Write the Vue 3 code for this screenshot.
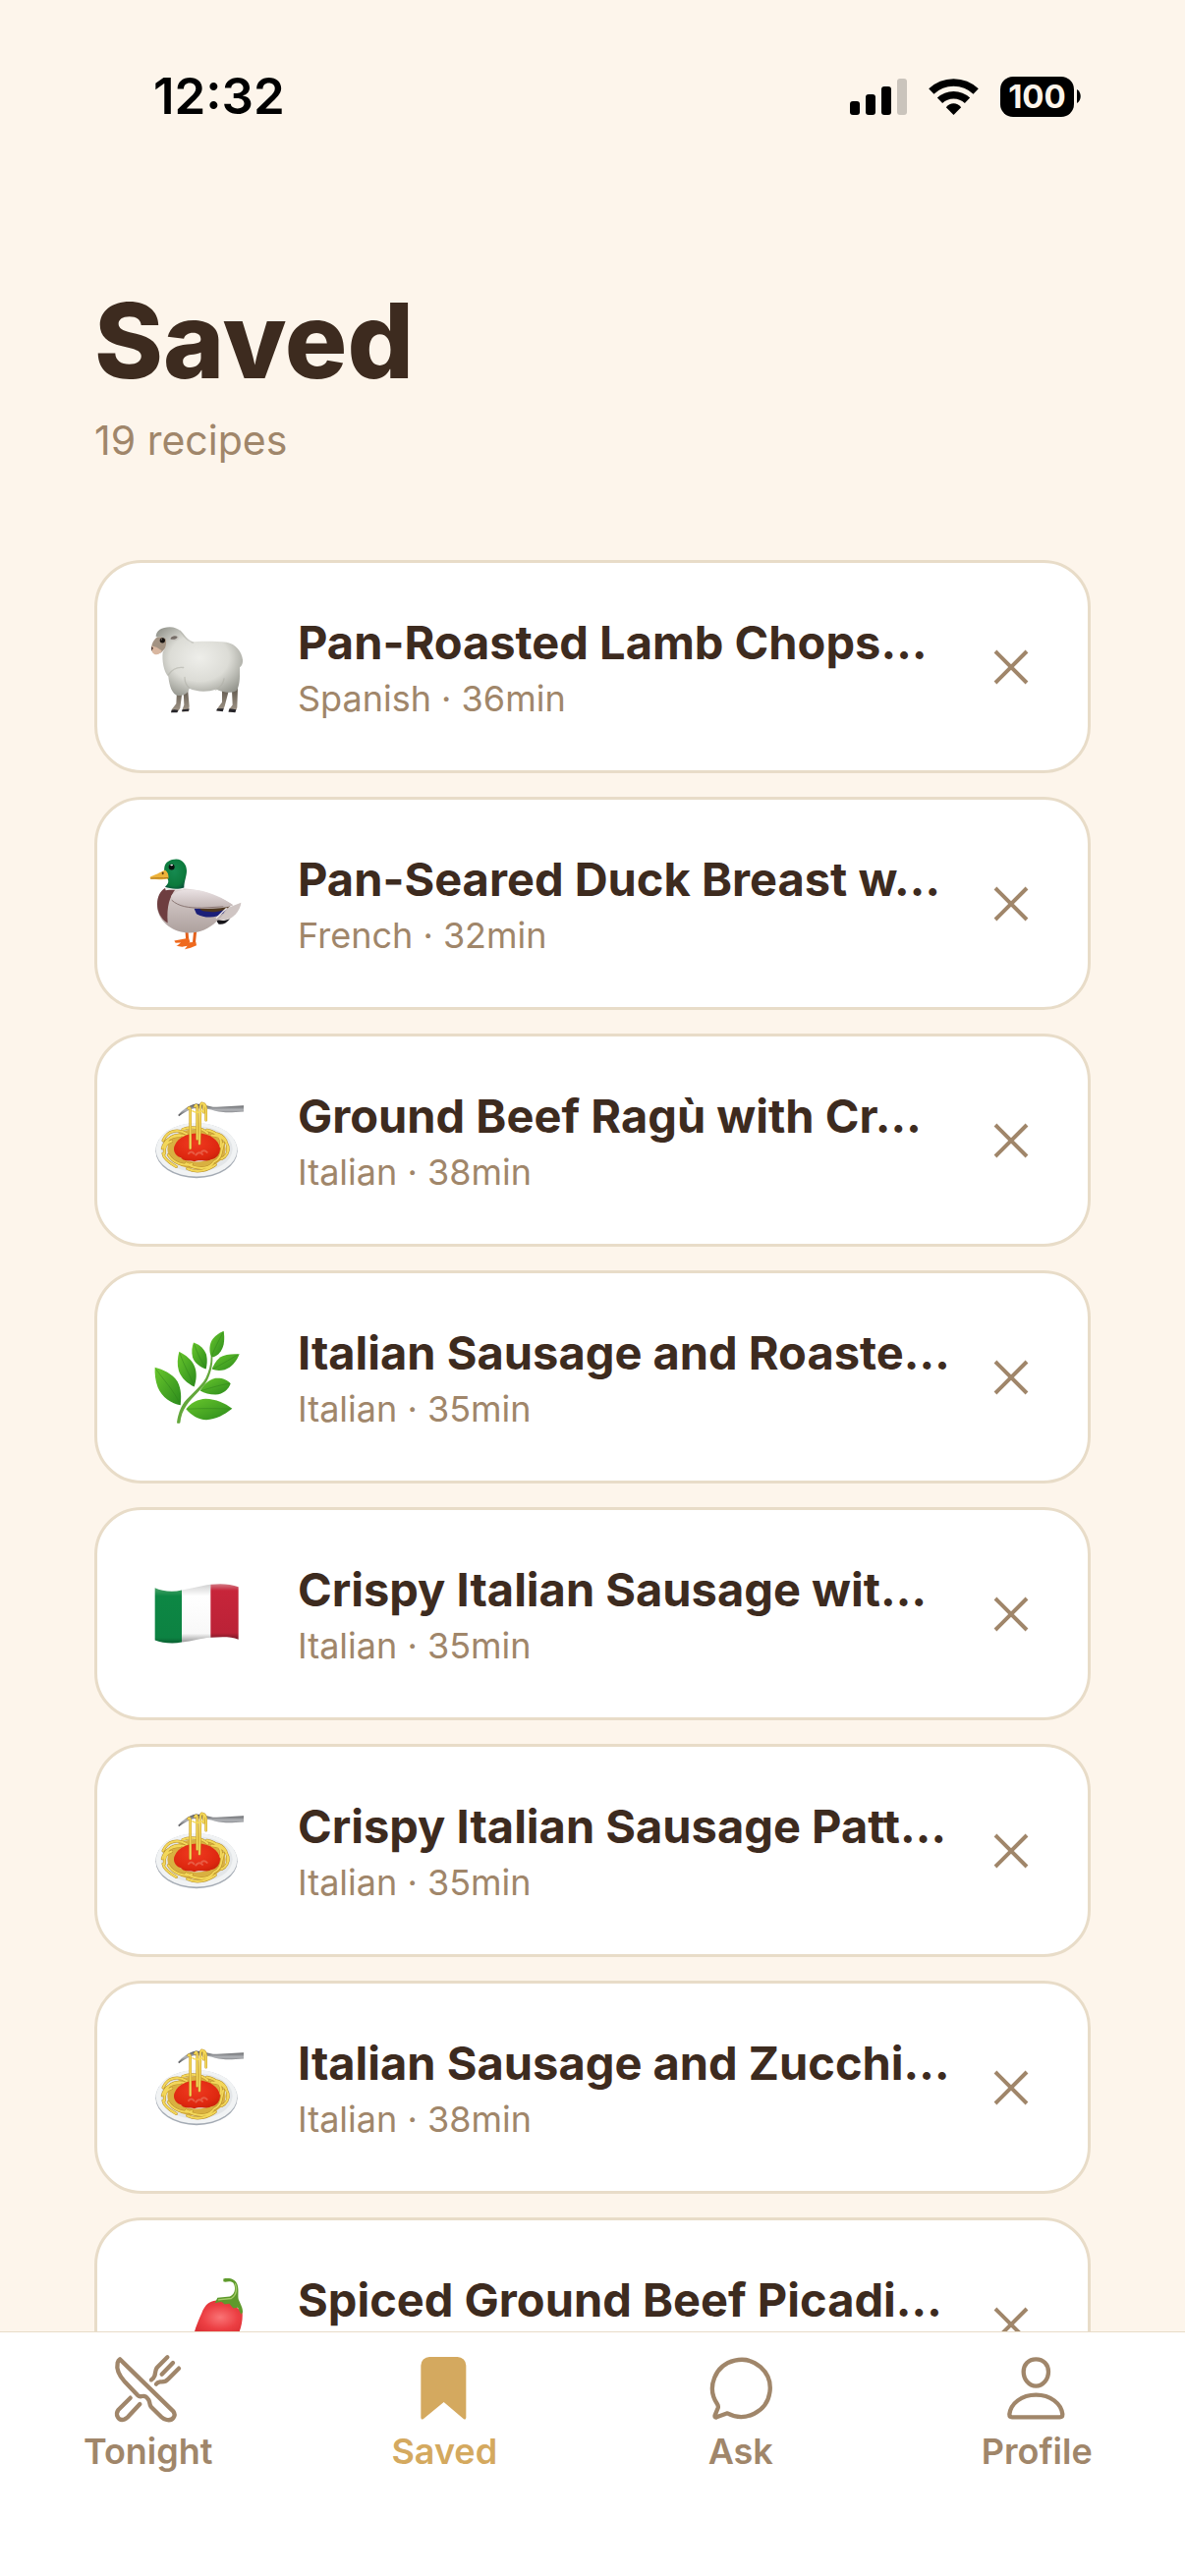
<template>
  <div class="saved-page">
    <!-- Emoji sprite -->
    <svg width="0" height="0" aria-hidden="true">
      <defs>
        <radialGradient id="wool" cx="0.5" cy="0.45" r="0.62">
          <stop offset="0" stop-color="#EEEEEA" />
          <stop offset="0.55" stop-color="#DCDCD6" />
          <stop offset="1" stop-color="#94958D" />
        </radialGradient>
        <linearGradient id="sheep-leg" x1="0" y1="0" x2="0" y2="1">
          <stop offset="0" stop-color="#5F574C" />
          <stop offset="1" stop-color="#A3988A" />
        </linearGradient>
        <radialGradient id="duck-head" cx="0.45" cy="0.4" r="0.7">
          <stop offset="0" stop-color="#168A50" />
          <stop offset="0.7" stop-color="#0C7A3C" />
          <stop offset="1" stop-color="#0A4A3A" />
        </radialGradient>
        <linearGradient id="duck-body" x1="0" y1="0" x2="0" y2="1">
          <stop offset="0" stop-color="#DDD3D2" />
          <stop offset="1" stop-color="#ADA09D" />
        </linearGradient>
        <linearGradient id="duck-wing" x1="0" y1="0" x2="0" y2="1">
          <stop offset="0" stop-color="#EAE2E3" />
          <stop offset="1" stop-color="#BFB2B1" />
        </linearGradient>
        <linearGradient id="fork" x1="0" y1="0" x2="0" y2="1">
          <stop offset="0" stop-color="#4E4F52" />
          <stop offset="0.5" stop-color="#B3B5B9" />
          <stop offset="1" stop-color="#4C4D50" />
        </linearGradient>
        <radialGradient id="sauce" cx="0.45" cy="0.35" r="0.75">
          <stop offset="0" stop-color="#F03A20" />
          <stop offset="0.7" stop-color="#DE2810" />
          <stop offset="1" stop-color="#C42008" />
        </radialGradient>
        <linearGradient id="leaf" x1="0" y1="0" x2="1" y2="1">
          <stop offset="0" stop-color="#69C72C" />
          <stop offset="1" stop-color="#2B8A1C" />
        </linearGradient>
        <linearGradient id="flag-green" x1="0" y1="0" x2="0" y2="1">
          <stop offset="0" stop-color="#4AA268" />
          <stop offset="0.15" stop-color="#0D8744" />
          <stop offset="0.9" stop-color="#0C8242" />
          <stop offset="1" stop-color="#0A5F31" />
        </linearGradient>
        <linearGradient id="flag-white" x1="0" y1="0" x2="0" y2="1">
          <stop offset="0" stop-color="#D2D2D2" />
          <stop offset="0.2" stop-color="#FFFFFF" />
          <stop offset="0.85" stop-color="#F8F8F8" />
          <stop offset="1" stop-color="#9A9A9A" />
        </linearGradient>
        <linearGradient id="flag-red" x1="0" y1="0" x2="0" y2="1">
          <stop offset="0" stop-color="#D27C86" />
          <stop offset="0.12" stop-color="#C7253A" />
          <stop offset="0.88" stop-color="#BB2237" />
          <stop offset="1" stop-color="#741826" />
        </linearGradient>
        <radialGradient id="chili" cx="0.74" cy="0.3" r="0.6">
          <stop offset="0" stop-color="#FA7476" />
          <stop offset="0.35" stop-color="#EC3F43" />
          <stop offset="1" stop-color="#C0141A" />
        </radialGradient>
      </defs>

      <symbol id="emoji-sheep" viewBox="21 13 324 324">
        <path d="M120 250L118 288 104 306 104 314 122 314 130 302 137 246zM140 246L142 292 136 308 137 313 156 312 158 296 153 240zM258 246L258 284 243 304 242 311 260 311 266 296 278 250zM288 248L290 292 279 306 279 314 298 314 304 300 306 240z" fill="url(#sheep-leg)" />
        <path d="M104 308L102 315 121 315 124 308 112 306zM137 306L135 312 156 311 158 304zM244 303L240 309 260 312 263 303zM281 303L277 313 298 315 301 306z" fill="#26252A" />
        <path d="M62 84C49 92 42 106 42 122 44 136 56 140 72 132L92 112 90 84z" fill="#A39383" />
        <path d="M44 112C42 124 44 136 54 138 66 138 72 132 74 126L58 116z" fill="#D9B7A0" />
        <path d="M42 114L48 118 43 127z" fill="#4A3730" />
        <path d="M56 84C56 64 74 54 98 54 128 54 140 74 160 101 184 97 238 97 272 101 300 106 318 130 321 154 322 164 318 174 312 177 312 200 314 224 304 246 288 260 254 252 240 244 214 254 178 252 158 242 154 258 138 268 118 262 100 252 96 222 94 206 80 190 74 158 77 130 84 122 90 104 86 90 76 82 64 86 56 84z" fill="url(#wool)" />
        <path d="M238 246C252 240 262 226 264 212M158 240C148 232 144 220 144 208M94 200C108 180 126 176 140 178M130 66C140 80 150 96 170 102" fill="none" stroke="#B0B0A8" stroke-width="4" stroke-linecap="round" opacity="0.6" />
        <path d="M97 88C102 78 116 76 125 83 128 90 120 97 110 96 102 96 98 92 97 88z" fill="#C8C6C0" />
        <path d="M100 90C104 82 114 79 122 84 118 92 108 94 100 90z" fill="#756C66" />
        <circle cx="76" cy="95" r="8" fill="#15120F" />
        <circle cx="73" cy="92" r="2" fill="#9A8F84" />
      </symbol>

      <symbol id="emoji-duck" viewBox="21 46 324 324">
        <path d="M150 292L152 320M176 292L172 332" fill="none" stroke="#E4601B" stroke-width="9" />
        <path d="M156 314L132 318 112 322 116 329 132 328 122 336 138 336 160 326zM178 326L150 328 118 338 136 341 152 338 144 348 162 344 180 336z" fill="#EF6A1E" />
        <path d="M264 226L316 206C314 226 300 246 280 256L246 262z" fill="#CFC5C3" />
        <path d="M238 256C252 262 266 262 282 255 272 268 258 275 247 271z" fill="#17151A" />
        <path d="M92 160C126 160 168 164 200 172 240 184 280 204 290 212 276 220 260 250 240 264 220 284 190 298 160 298 110 298 66 266 60 222 58 190 70 168 92 160z" fill="url(#duck-body)" />
        <path d="M86 160L118 162C98 186 88 216 92 268 70 254 60 232 60 210 60 188 70 168 86 160z" fill="#6E3E40" />
        <path d="M172 222L272 222 262 238C240 254 204 254 180 240z" fill="#1B1F78" />
        <path d="M182 218L284 214C270 232 230 240 196 230z" fill="#4E3720" />
        <path d="M102 186C116 166 156 162 196 170 240 180 280 204 292 214 262 224 224 226 186 224 148 224 112 212 102 186z" fill="url(#duck-wing)" />
        <path d="M104 198C126 218 156 222 196 222L262 218" fill="none" stroke="#8B7774" stroke-width="3" />
        <path d="M240 254L272 222" stroke="#EEE8E6" stroke-width="4" />
        <path d="M82 154L142 158 140 166C118 168 98 166 86 168z" fill="#F0F0EE" />
        <path d="M82 98C84 82 100 73 118 73 138 74 150 90 150 108 150 126 142 140 142 160 124 166 98 164 84 158 94 148 96 142 92 134 82 124 80 112 82 98z" fill="url(#duck-head)" />
        <path d="M84 106C72 112 62 118 40 126 36 130 38 134 44 134 62 136 80 136 94 132 96 122 92 112 84 106z" fill="#EDB23A" />
        <path d="M40 132C58 130 74 132 94 130" fill="none" stroke="#A9731D" stroke-width="3" />
        <ellipse cx="77" cy="116" rx="3" ry="4" fill="#5B3B12" />
        <ellipse cx="104" cy="97" rx="9" ry="9" fill="#08120E" />
        <ellipse cx="104" cy="91" rx="4" ry="2" fill="#FFFFFF" />
      </symbol>

      <symbol id="emoji-spaghetti" viewBox="21 19 324 324">
        <ellipse cx="180" cy="213" rx="125" ry="84" fill="#A4ABB4" />
        <ellipse cx="180" cy="210" rx="124" ry="82" fill="#F1F3F4" />
        <ellipse cx="180" cy="208" rx="110" ry="70" fill="#E3E6E8" />
        <g fill="none" stroke-linecap="round">
          <ellipse cx="180" cy="208" rx="78" ry="50" stroke="#D9B040" stroke-width="22" />
          <path d="M78 182C92 150 124 146 150 162M84 196C96 166 126 158 152 172M138 148C160 138 196 142 214 160M212 150C244 156 262 178 252 202M226 166C262 168 280 188 274 214M262 190C254 214 258 238 232 248M94 226C108 250 140 262 166 254M148 252C180 272 216 270 230 252M76 206C84 178 106 168 130 168M82 222C80 200 88 188 104 184M118 262C96 250 80 238 78 222M152 268C180 282 214 274 238 256M256 238C270 232 280 216 276 200M236 160C252 162 264 172 270 184" stroke="#B98F28" stroke-width="9" />
          <path d="M78 182C92 150 124 146 150 162M84 196C96 166 126 158 152 172M138 148C160 138 196 142 214 160M212 150C244 156 262 178 252 202M226 166C262 168 280 188 274 214M262 190C254 214 258 238 232 248M94 226C108 250 140 262 166 254M148 252C180 272 216 270 230 252M76 206C84 178 106 168 130 168M82 222C80 200 88 188 104 184M118 262C96 250 80 238 78 222M152 268C180 282 214 274 238 256M256 238C270 232 280 216 276 200M236 160C252 162 264 172 270 184" stroke="#F3D75A" stroke-width="6" />
        </g>
        <path d="M114 196C124 172 154 160 184 160 220 160 248 180 252 206 252 224 242 238 224 240 210 248 188 240 174 246 158 242 140 246 132 234 114 230 106 210 114 196z" fill="url(#sauce)" />
        <path d="M156 222q8 -10 16 0M178 226q10 -12 20 -2M196 216q8 -6 16 2" fill="none" stroke="#E85C44" stroke-width="6" stroke-linecap="round" />
        <path d="M124 104C138 88 154 76 178 70L200 72C214 76 226 80 242 80L324 75V94C296 96 268 98 248 94 232 92 222 86 206 86L172 84C156 88 140 98 126 108z" fill="url(#fork)" />
        <g fill="none" stroke-linecap="round">
          <path d="M161 206V92Q161 78 155 84M182 178V84Q182 68 175 78M189 192L192 78Q194 62 202 72V96M209 120V84Q206 66 196 70" stroke="#C49A2A" stroke-width="8" />
          <path d="M161 206V92Q161 78 155 84M182 178V84Q182 68 175 78M189 192L192 78Q194 62 202 72V96M209 120V84Q206 66 196 70M168 92Q180 100 200 92" stroke="#F4D95A" stroke-width="5" />
        </g>
      </symbol>

      <symbol id="emoji-herb" viewBox="21 22 324 324">
        <path d="M120 324C124 298 130 280 142 262 164 236 192 216 208 188 218 168 224 146 224 122L229 124C230 150 222 176 212 196 196 224 168 244 150 270 138 286 132 304 130 324Q125 328 120 324z" fill="#63A73B" />
        <g fill="url(#leaf)">
          <path d="M53 155C78 162 106 174 122 198 134 222 134 246 131 270 104 266 74 246 62 216 54 196 52 174 53 155z" />
          <path d="M127 107C148 118 166 132 174 152 182 172 180 194 173 214 152 204 134 188 126 166 120 146 122 126 127 107z" />
          <path d="M171 79C190 86 204 98 210 116 214 132 212 148 209 160 192 154 174 142 168 124 164 108 166 92 171 79z" />
          <path d="M263 44C266 66 266 88 254 106 246 118 234 124 225 124 218 106 218 84 230 68 240 56 250 50 263 44z" />
          <path d="M311 114C302 136 288 154 266 162 250 166 236 164 227 160 234 144 242 128 260 120 276 114 292 114 311 114z" />
          <path d="M191 226C202 208 218 192 238 188 256 186 274 192 284 204 278 222 262 236 238 238 220 238 204 234 191 226z" />
          <path d="M148 282C162 264 184 252 208 251 240 252 266 264 289 281 264 300 240 314 210 315 184 314 164 300 148 282z" />
        </g>
        <path d="M56 160C80 194 110 224 130 268M129 112C140 146 160 178 172 210M173 84C182 112 196 138 208 158M261 48C248 74 234 98 226 122M306 116C280 132 252 148 230 160M282 204C252 208 222 218 194 226M284 282C240 280 196 280 152 282" fill="none" stroke="#2D7F1B" stroke-width="2" opacity="0.7" />
      </symbol>

      <symbol id="emoji-flag" viewBox="21 25 324 324">
        <path d="M53 108C74 118 106 122 135 115V274C106 280 74 276 53 268z" fill="url(#flag-green)" />
        <path d="M135 115C168 110 192 102 223 98V260C192 262 168 272 135 274z" fill="url(#flag-white)" />
        <path d="M223 98C254 94 284 96 308 105V266C284 256 254 258 223 260z" fill="url(#flag-red)" />
      </symbol>

      <symbol id="emoji-chili" viewBox="261 214 324 324">
        <path d="M480 304C458 306 446 318 436 342 426 364 418 384 412 406 392 436 360 452 300 462 296 468 300 474 310 474 400 484 500 460 540 420 554 400 562 370 560 340L524 310z" fill="url(#chili)" />
        <path d="M476 312L484 296 522 292C540 284 540 262 532 250 524 244 514 246 508 248L502 246 502 238C520 234 538 238 544 254 550 270 546 286 548 300 554 314 562 328 561 340L556 347 546 326 532 328 520 314 506 316 496 308z" fill="#5E9A2C" />
        <path d="M486 302L526 298C544 286 544 266 538 252" fill="none" stroke="#A3CB68" stroke-width="4" />
      </symbol>
    </svg>

    <!-- Status Bar -->
    <div class="status-bar">
      <span class="status-time">12:32</span>
      <div class="status-icons">
        <svg class="signal-icon" viewBox="0 0 174 111" aria-hidden="true">
          <rect x="0" y="69" width="30" height="42" rx="9" />
          <rect x="48" y="48" width="30" height="63" rx="9" />
          <rect x="96" y="24" width="30" height="87" rx="9" />
          <rect x="144" y="0" width="30" height="111" rx="9" opacity="0.2" />
        </svg>
        <svg class="wifi-icon" viewBox="0 0 152 111" aria-hidden="true">
          <path d="M8 39A99 99 0 0 1 144 39M34 67A61 61 0 0 1 118 67" fill="none" stroke="#000" stroke-width="23" />
          <path d="M76 111L53 88C65 72 87 72 99 88z" />
        </svg>
        <div class="battery">
          <span class="battery-level">100</span>
          <svg class="battery-tip" viewBox="0 0 4 14" aria-hidden="true">
            <path d="M0 0C5 3 5 11 0 14z" />
          </svg>
        </div>
      </div>
    </div>

    <!-- Saved Recipes -->
    <main class="content">
      <header class="page-header">
        <h1 class="page-title">Saved</h1>
        <p class="page-subtitle">19 recipes</p>
      </header>

      <ul class="recipe-list">
        <li v-for="recipe in recipes" :key="recipe.id" class="recipe-card">
          <svg class="recipe-emoji" aria-hidden="true">
            <use :href="'#emoji-' + recipe.emoji" />
          </svg>
          <div class="recipe-info">
            <h2 class="recipe-title">{{ recipe.title }}</h2>
            <p v-if="recipe.cuisine" class="recipe-meta">{{ recipe.cuisine }} · {{ recipe.minutes }}min</p>
          </div>
          <button type="button" class="remove-button" @click="removeRecipe(recipe.id)">
            <svg viewBox="0 0 60 60" aria-hidden="true">
              <path d="M14 14L46 46M46 14L14 46" />
            </svg>
          </button>
        </li>
      </ul>
    </main>

    <!-- Tab Bar -->
    <nav class="tab-bar">
      <a
        v-for="tab in tabs"
        :key="tab.name"
        href="#"
        class="tab"
        :class="{ active: tab.name === activeTab }"
        @click.prevent="activeTab = tab.name"
      >
        <svg class="tab-icon" viewBox="0 0 216 216" aria-hidden="true">
          <path v-for="d in tab.paths" :key="d" :d="d" :class="{ filled: tab.filled }" />
        </svg>
        <span class="tab-label">{{ tab.name }}</span>
      </a>
    </nav>
  </div>
</template>

<script setup>
import { ref } from 'vue'

const activeTab = ref('Saved')

const recipes = ref([
  { id: 1, emoji: 'sheep', title: 'Pan-Roasted Lamb Chops…', cuisine: 'Spanish', minutes: 36 },
  { id: 2, emoji: 'duck', title: 'Pan-Seared Duck Breast w…', cuisine: 'French', minutes: 32 },
  { id: 3, emoji: 'spaghetti', title: 'Ground Beef Ragù with Cr…', cuisine: 'Italian', minutes: 38 },
  { id: 4, emoji: 'herb', title: 'Italian Sausage and Roaste…', cuisine: 'Italian', minutes: 35 },
  { id: 5, emoji: 'flag', title: 'Crispy Italian Sausage wit…', cuisine: 'Italian', minutes: 35 },
  { id: 6, emoji: 'spaghetti', title: 'Crispy Italian Sausage Patt…', cuisine: 'Italian', minutes: 35 },
  { id: 7, emoji: 'spaghetti', title: 'Italian Sausage and Zucchi…', cuisine: 'Italian', minutes: 38 },
  { id: 8, emoji: 'chili', title: 'Spiced Ground Beef Picadi…' }
])

const tabs = [
  {
    name: 'Tonight',
    paths: [
      'M21 19L184 178C194 192 182 208 164 204Q154 202 148 196L116 164C110 156 114 150 108 142Q100 130 90 132Q80 134 76 130L36 88C16 66 10 48 14 30Q16 22 21 19z',
      'M53 137L16 174C6 188 16 208 34 203Q40 201 45 196L82 156',
      'M166 13L134 45C128 54 130 62 127 70Q124 78 117 82',
      'M201 47L168 80C160 90 152 88 144 88Q136 89 132 95',
      'M183 30L149 65'
    ]
  },
  {
    name: 'Saved',
    filled: true,
    paths: ['M63 12H149A26 26 0 0 1 175 38V197Q174 206 167 201L107 150 45 201Q38 206 37 197V38A26 26 0 0 1 63 12z']
  },
  {
    name: 'Ask',
    paths: ['M67 184A88 87 0 1 0 36 156Q40 162 38 168L29 190Q27 198 34 196z']
  },
  {
    name: 'Profile',
    paths: [
      'M106 19C129 19 144 35 144 57C144 80 128 101 106 101C84 101 68 80 68 57C68 35 83 19 106 19z',
      'M25 187C29 154 62 128 106 128C150 128 183 154 187 187Q187 196 179 196H33Q25 196 25 187z'
    ]
  }
]

const removeRecipe = (id) => {
  recipes.value = recipes.value.filter(recipe => recipe.id !== id)
}
</script>

<style>
body {
  margin: 0;
}
</style>

<style scoped>
.saved-page {
  display: flex;
  flex-direction: column;
  height: 100vh;
  overflow: hidden;
  background: #FDF5EB;
  font-family: Inter, "Liberation Sans", sans-serif;
}

/* Status Bar */
.status-bar {
  display: flex;
  align-items: center;
  justify-content: space-between;
  height: 196px;
  padding: 0 106px 0 156px;
  box-sizing: border-box;
  flex-shrink: 0;
}

.status-time {
  color: #000;
  font-size: 51px;
  font-weight: 600;
  line-height: 60px;
}

.status-icons {
  display: flex;
  align-items: center;
  gap: 22px;
}

.signal-icon {
  width: 58px;
  height: 37px;
}

.wifi-icon {
  width: 51px;
  height: 37px;
}

.battery {
  display: flex;
  align-items: center;
  gap: 3px;
}

.battery-level {
  width: 75px;
  border-radius: 13px;
  background: #000;
  color: #FDF5EB;
  font-size: 33px;
  font-weight: 700;
  line-height: 41px;
  text-align: center;
}

.battery-tip {
  width: 4px;
  height: 14px;
}

/* Saved Recipes */
.content {
  flex: 1;
  min-height: 0;
  padding: 86px 96px 0;
  overflow: hidden;
}

.page-header {
  display: flex;
  flex-direction: column;
  gap: 10px;
  margin-bottom: 96px;
}

.page-title {
  margin: 0;
  color: #3D2B1F;
  font-size: 106px;
  font-weight: 800;
  line-height: 130px;
}

.page-subtitle {
  margin: 0;
  color: #A0866A;
  font-size: 41px;
  font-weight: 400;
  line-height: 52px;
}

.recipe-list {
  display: flex;
  flex-direction: column;
  gap: 24px;
  margin: 0;
  padding: 0;
  list-style: none;
}

.recipe-card {
  display: flex;
  align-items: center;
  padding: 48px;
  border: 3px solid #E8DCC8;
  border-radius: 48px;
  background: #FFF;
}

.recipe-emoji {
  width: 108px;
  height: 115px;
  margin-right: 48px;
  flex-shrink: 0;
}

.recipe-info {
  display: flex;
  flex: 1;
  flex-direction: column;
  gap: 6px;
  min-width: 0;
  min-height: 108px;
}

.recipe-title {
  margin: 0;
  color: #3D2B1F;
  font-size: 47px;
  font-weight: 700;
  line-height: 58px;
  white-space: nowrap;
}

.recipe-meta {
  margin: 0;
  color: #A0866A;
  font-size: 36px;
  font-weight: 400;
  line-height: 44px;
}

.remove-button {
  width: 60px;
  height: 60px;
  padding: 0;
  border: none;
  background: none;
  cursor: pointer;
  flex-shrink: 0;
}

.remove-button svg {
  display: block;
}

.remove-button path {
  fill: none;
  stroke: #A0866A;
  stroke-width: 4;
}

/* Tab Bar */
.tab-bar {
  display: flex;
  padding: 21px 0 105px;
  border-top: 1px solid #E8DCC8;
  background: #FFF;
  flex-shrink: 0;
}

.tab {
  display: flex;
  flex: 1;
  flex-direction: column;
  align-items: center;
  gap: 6px;
  color: #A0866A;
  text-decoration: none;
}

.tab.active {
  color: #D4A95F;
}

.tab-icon {
  width: 72px;
  height: 72px;
}

.tab-icon path {
  fill: none;
  stroke: currentColor;
  stroke-width: 13;
  stroke-linecap: round;
  stroke-linejoin: round;
}

.tab-icon path.filled {
  fill: currentColor;
  stroke: none;
}

.tab-label {
  font-size: 36px;
  font-weight: 600;
  line-height: 44px;
}
</style>
